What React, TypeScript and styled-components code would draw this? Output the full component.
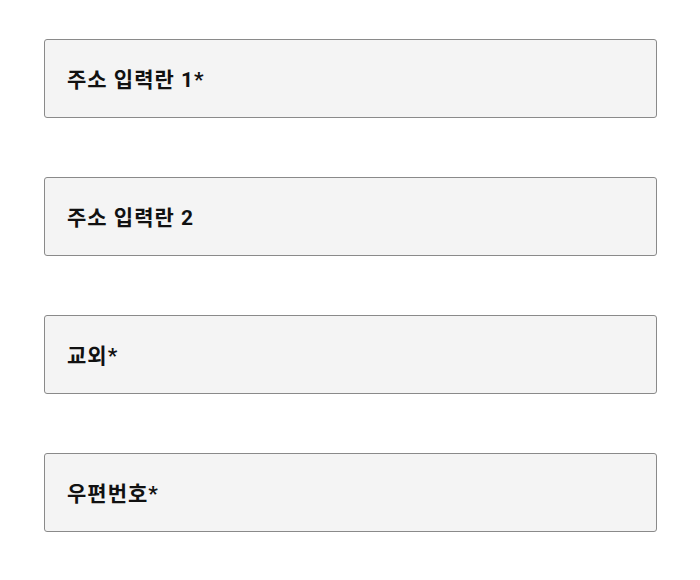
import styled, { createGlobalStyle } from 'styled-components';

const GlobalStyle = createGlobalStyle`
  body {
    margin: 0;
    background: #ffffff;
    font-family: Roboto, "Noto Sans CJK KR", sans-serif;
  }
`;

const fields = ['주소 입력란 1*', '주소 입력란 2', '교외*', '우편번호*'];

const App: React.FC = () => {
  return (
    <>
      <GlobalStyle />
      <Form>
        {fields.map((label) => (
          <Field key={label}>
            <Label>{label}</Label>
          </Field>
        ))}
      </Form>
    </>
  );
};

const Form = styled.div`
  display: flex;
  flex-direction: column;
  gap: 59px;
  padding: 39px 43px 0 44px;
`;

const Field = styled.div`
  height: 79px;
  box-sizing: border-box;
  border: 1px solid #8a8a8a;
  border-radius: 3px;
  background: #f4f4f4;
  display: flex;
  align-items: center;
  padding: 0 22px 2px;
`;

const Label = styled.span`
  font-family: Roboto, "Noto Sans CJK KR", sans-serif;
  font-weight: 700;
  font-size: 21px;
  letter-spacing: 1px;
  color: #111111;
`;

export default App;
